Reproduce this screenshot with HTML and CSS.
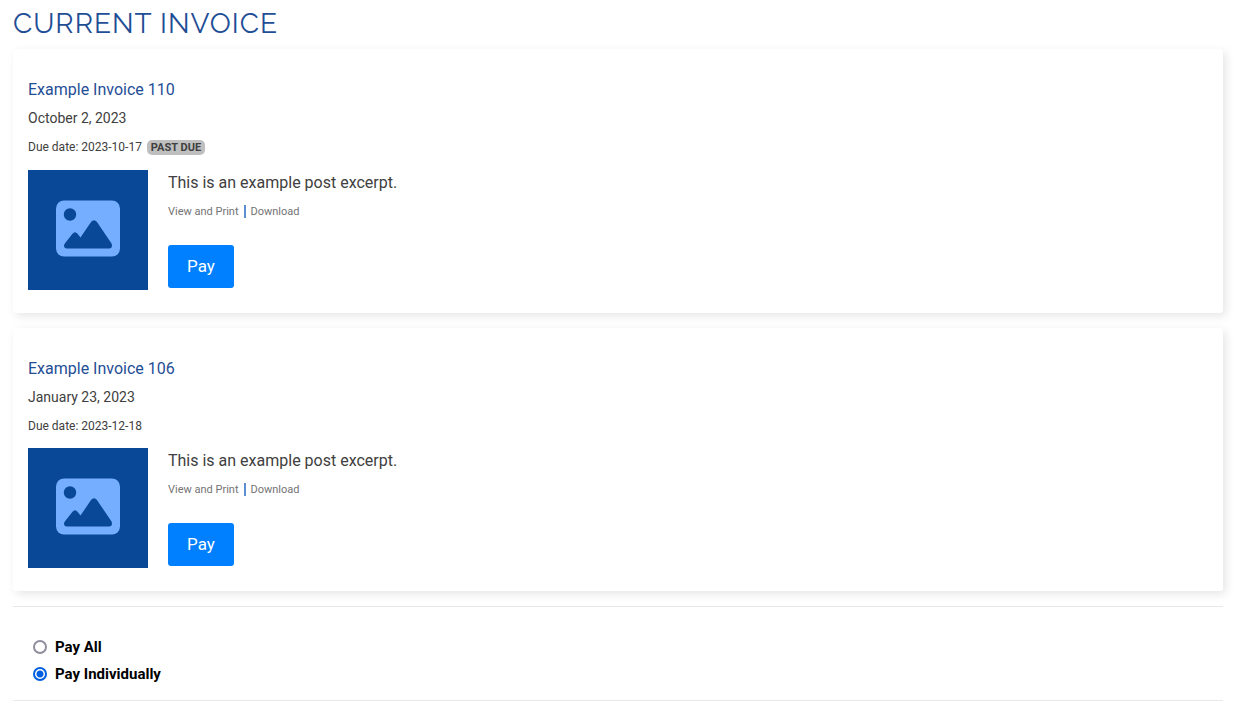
FILE: index.html
```
<!DOCTYPE html>
<html lang="en">

<head>
  <meta charset="UTF-8">
  <meta name="viewport" content="width=device-width, initial-scale=1.0">
  <title>Current Invoice</title>
  <link rel="stylesheet" href="styles.css">
</head>

<body>
  <main class="invoices">
    <h1>Current Invoice</h1>

    <article class="invoice">
      <h2><a href="#invoice-110">Example Invoice 110</a></h2>
      <p class="date">October 2, 2023</p>
      <p class="due">Due date: 2023-10-17 <span class="badge">PAST DUE</span></p>
      <div class="details">
        <svg class="thumb" viewBox="0 0 120 120" aria-hidden="true">
          <rect width="120" height="120" fill="#084897" />
          <rect x="28" y="30.500" width="64" height="56" rx="8" fill="#75adff" />
          <circle cx="42" cy="44.500" r="6.200" fill="#084897" />
          <path d="M39 78.500Q36 78.500 36 75.500Q36 74.500 37 73.200L44.500 63.800Q47 60.800 49.500 63.800L52.500 67.500L63.200 51.800Q66 48.500 68.800 51.800L83.200 73Q84 74.400 84 75.500Q84 78.500 81 78.500Z" fill="#084897" />
        </svg>
        <div class="summary">
          <p class="excerpt">This is an example post excerpt.</p>
          <div class="links">
            <a href="#print-110">View and Print</a>
            <a href="#download-110">Download</a>
          </div>
          <button type="button" class="pay">Pay</button>
        </div>
      </div>
    </article>

    <article class="invoice">
      <h2><a href="#invoice-106">Example Invoice 106</a></h2>
      <p class="date">January 23, 2023</p>
      <p class="due">Due date: 2023-12-18</p>
      <div class="details">
        <svg class="thumb" viewBox="0 0 120 120" aria-hidden="true">
          <rect width="120" height="120" fill="#084897" />
          <rect x="28" y="30.500" width="64" height="56" rx="8" fill="#75adff" />
          <circle cx="42" cy="44.500" r="6.200" fill="#084897" />
          <path d="M39 78.500Q36 78.500 36 75.500Q36 74.500 37 73.200L44.500 63.800Q47 60.800 49.500 63.800L52.500 67.500L63.200 51.800Q66 48.500 68.800 51.800L83.200 73Q84 74.400 84 75.500Q84 78.500 81 78.500Z" fill="#084897" />
        </svg>
        <div class="summary">
          <p class="excerpt">This is an example post excerpt.</p>
          <div class="links">
            <a href="#print-106">View and Print</a>
            <a href="#download-106">Download</a>
          </div>
          <button type="button" class="pay">Pay</button>
        </div>
      </div>
    </article>

    <form class="pay-options">
      <div class="option">
        <input type="radio" name="pay-mode" id="pay-all" value="all">
        <label for="pay-all">Pay All</label>
      </div>
      <div class="option">
        <input type="radio" name="pay-mode" id="pay-individually" value="individually" checked>
        <label for="pay-individually">Pay Individually</label>
      </div>
    </form>
  </main>
</body>

</html>
```
FILE: styles.css
```
* {
  box-sizing: border-box;
}

body {
  margin: 0;
  background: #fff;
  color: #404040;
  font-family: Roboto, sans-serif;
  font-size: 16px;
}

h1,
h2,
p {
  margin: 0;
  font-weight: 400;
}

a {
  color: inherit;
  text-decoration: none;
}

.invoices {
  padding: 6px 29px 20px 13px;
}

h1 {
  margin-bottom: 7px;
  color: #1f4e96;
  font-family: Raleway, Lato, sans-serif;
  font-size: 28px;
  font-weight: 400;
  line-height: 36px;
  letter-spacing: 1px;
  text-transform: uppercase;
}

/* Invoice cards */
.invoice {
  margin-bottom: 15px;
  padding: 27px 15px 23px;
  border-radius: 3px;
  background: #fff;
  box-shadow: 3px 3px 10px rgba(0, 0, 0, 0.1);
}

.invoice h2 {
  color: #1f4e96;
  font-size: 16px;
  line-height: 28px;
}

.date {
  font-size: 14px;
  line-height: 29px;
}

.due {
  font-size: 12px;
  line-height: 28px;
}

.badge {
  margin-left: 2px;
  padding: 1px 4px;
  border-radius: 5px;
  background: #bfbfbf;
  font-size: 11px;
  font-weight: 700;
}

.details {
  display: flex;
  gap: 20px;
  margin-top: 8px;
}

.thumb {
  flex: none;
  width: 120px;
  height: 120px;
}

.excerpt {
  line-height: 26px;
}

.links {
  display: flex;
  align-items: center;
  height: 30px;
  color: #737373;
  font-size: 11px;
}

.links a + a {
  margin-left: 5px;
  padding-left: 5px;
  border-left: 2px solid #5b8fd0;
}

.pay {
  margin-top: 19px;
  padding: 12px 19px;
  border: 0;
  border-radius: 3px;
  background: #007fff;
  color: #fff;
  font-family: inherit;
  font-size: 17px;
  line-height: 19px;
  cursor: pointer;
}

/* Payment mode */
.pay-options {
  padding: 26px 20px 13px;
  border-top: 1px solid #e8e8e8;
  border-bottom: 1px solid #e8e8e8;
}

.option {
  display: flex;
  align-items: center;
  gap: 8px;
  height: 27px;
  color: #000;
  font-size: 15px;
  font-weight: 700;
}

.option input {
  appearance: none;
  width: 14px;
  height: 14px;
  margin: 0;
  border: 2px solid #8f8f9d;
  border-radius: 50%;
  background: #fff;
}

.option input:checked {
  border-color: #0060df;
  background: radial-gradient(circle, #0060df 3px, #fff 4px);
}
```
